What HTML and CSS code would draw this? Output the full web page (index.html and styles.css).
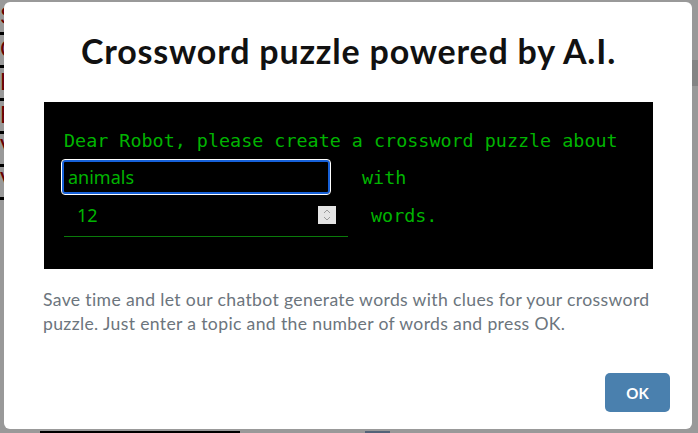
FILE: index.html
```html
<!DOCTYPE html>
<html lang="en">
<head>
    <meta charset="UTF-8">
    <meta name="viewport" content="width=device-width, initial-scale=1.0">
    <title>Crossword puzzle powered by A.I.</title>
    <link rel="stylesheet" href="styles.css">
</head>
<body>

    <!-- page behind the dialog -->
    <div class="page">
        <div class="side-letters">
            <span>S</span><span>C</span><span>L</span><span>E</span><span>V</span><span>V</span>
        </div>
        <div class="page-main">
            <div class="grid-row">
                <span class="cell"></span><span class="cell"></span><span class="cell"></span><span class="cell"></span>
                <span class="cell"></span><span class="cell"></span><span class="cell"></span><span class="cell"></span>
                <span class="grid-gap"></span>
                <span class="cell cell-blue"></span>
            </div>
        </div>
        <div class="side-list">
            <div class="side-head"></div>
            <p>p</p><p>i</p><p>is</p><p>f</p><p>s</p><p class="link">r</p>
            <p>p</p><p>n</p><p>p</p><p>t</p><p>a</p><p>r</p>
        </div>
    </div>

    <div class="backdrop">
        <div class="modal">
            <h1 class="modal-title">Crossword puzzle powered by A.I.</h1>

            <div class="terminal">
                <p class="prompt">Dear Robot, please create a crossword puzzle about</p>
                <div class="prompt-row">
                    <input class="topic-input is-focused" type="text" value="animals">
                    <span class="prompt-word with-word">with</span>
                </div>
                <div class="prompt-row">
                    <div class="count-field">
                        <input class="count-input" type="number" value="12">
                        <span class="spinner">
                            <svg width="10" height="14" viewBox="0 0 10 14">
                                <path d="M2 5 L5 2 L8 5" fill="none" stroke="#9a9a9a" stroke-width="1"/>
                                <path d="M2 9 L5 12 L8 9" fill="none" stroke="#9a9a9a" stroke-width="1"/>
                            </svg>
                        </span>
                    </div>
                    <span class="prompt-word words-word">words.</span>
                </div>
            </div>

            <p class="hint">Save time and let our chatbot generate words with clues for your crossword puzzle. Just enter a topic and the number of words and press OK.</p>

            <div class="modal-footer">
                <button class="ok-btn">OK</button>
            </div>
        </div>
    </div>

</body>
</html>
```

FILE: styles.css
```css
body {
    margin: 0;
    padding: 0;
    font-family: 'Lato', 'Noto Sans', sans-serif;
    background-color: #fff;
    overflow: hidden;
}

/* page behind */
.page {
    display: flex;
    height: 433px;
    overflow: hidden;
}

.side-letters {
    display: flex;
    flex-direction: column;
    width: 40px;
    padding-top: 2px;
    font-family: 'Liberation Sans', sans-serif;
    font-size: 24px;
    color: #b00000;
}

.side-letters span {
    height: 30px;
    border-bottom: 3px solid #000;
}

.page-main {
    flex: 1;
    display: flex;
    flex-direction: column;
    justify-content: flex-end;
}

.grid-row {
    display: flex;
    height: 2px;
}

.cell {
    width: 21px;
    height: 0;
    border: 2px solid #000;
    border-bottom: none;
    background: #fff;
}

.grid-gap {
    width: 125px;
}

.cell-blue {
    border-color: #8aa6c8;
    background: #dfe8f2;
}

.side-list {
    width: 30px;
    padding-top: 60px;
    font-family: 'Liberation Sans', sans-serif;
    font-size: 15px;
    color: #222;
}

.side-head {
    height: 26px;
    background: #ddd;
    margin-bottom: 12px;
}

.side-list p {
    margin: 0;
    height: 22px;
}

.side-list .link {
    color: #1a4fa0;
}

/* dialog */
.backdrop {
    position: fixed;
    inset: 0;
    background-color: rgba(0, 0, 0, 0.4);
    padding: 2px 6px 4px 4px;
}

.modal {
    background-color: #fff;
    border-radius: 6px;
    height: 427px;
    box-sizing: border-box;
    padding: 0 39px 0 40px;
    display: flex;
    flex-direction: column;
}

.modal-title {
    margin: 27px 0 0;
    text-align: center;
    font-size: 34px;
    font-weight: 700;
    letter-spacing: 0.8px;
    color: #111;
    line-height: 44px;
}

.terminal {
    margin-top: 29px;
    background-color: #000;
    height: 167px;
    box-sizing: border-box;
    padding: 26px 20px 0;
    color: #00b400;
    font-family: 'DejaVu Sans Mono', monospace;
    font-size: 18.4px;
}

.prompt {
    margin: 0 0 6px;
    line-height: 26px;
}

.prompt-row {
    display: flex;
    align-items: center;
}

.topic-input {
    width: 268px;
    height: 34px;
    box-sizing: border-box;
    margin-left: -2px;
    background: #000;
    color: #00b400;
    font-family: 'Noto Sans', sans-serif;
    font-size: 18px;
    padding: 0 4px;
    border: 2px solid #1660d8;
    border-radius: 3px;
    outline: 1px solid #fff;
    outline-offset: 0;
}

.with-word {
    margin-left: 32px;
}

.count-field {
    position: relative;
    width: 284px;
    height: 42px;
    border-bottom: 1px solid #0a7a0a;
}

.count-input {
    width: 100%;
    height: 42px;
    box-sizing: border-box;
    background: transparent;
    border: none;
    outline: none;
    color: #00b400;
    font-family: 'Noto Sans', sans-serif;
    font-size: 18px;
    padding: 0 0 0 13px;
    -moz-appearance: textfield;
}

.count-input::-webkit-inner-spin-button,
.count-input::-webkit-outer-spin-button {
    -webkit-appearance: none;
    margin: 0;
}

.spinner {
    position: absolute;
    right: 12px;
    top: 12px;
    width: 18px;
    height: 18px;
    background: #e4e4e4;
    display: flex;
    align-items: center;
    justify-content: center;
}

.words-word {
    margin-left: 23px;
}

.hint {
    margin: 19px 0 0 -1px;
    font-family: 'Lato', sans-serif;
    font-size: 17.6px;
    letter-spacing: 0.35px;
    line-height: 24px;
    color: #6c757d;
}

.modal-footer {
    display: flex;
    justify-content: flex-end;
    margin-top: auto;
    margin-right: -17px;
    margin-bottom: 17px;
}

.ok-btn {
    width: 65px;
    height: 39px;
    background-color: #4a80ae;
    color: #fff;
    border: none;
    border-radius: 5px;
    font-family: 'Lato', 'Noto Sans', sans-serif;
    font-weight: 700;
    font-size: 15px;
    cursor: pointer;
}
```
